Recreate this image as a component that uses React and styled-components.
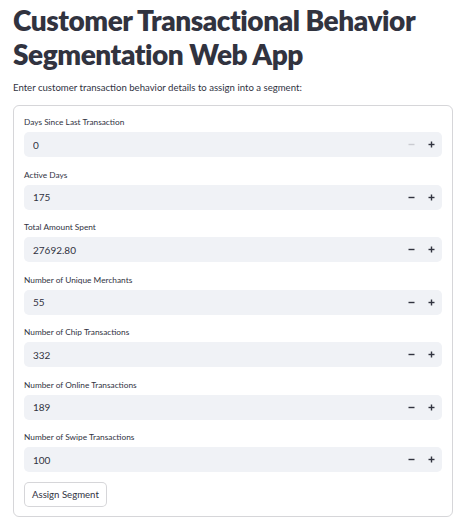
import React from 'react';
import styled, { createGlobalStyle } from 'styled-components';

const GlobalStyle = createGlobalStyle`
  body {
    margin: 0;
    background: #ffffff;
    color: #31333f;
    font-family: "Lato", "Noto Sans", sans-serif;
  }
`;

const Main = styled.main`
  padding: 4px 7px 0 13px;
`;

const Title = styled.h1`
  margin: 0;
  font-size: 28px;
  line-height: 1.2;
  font-weight: 800;
  color: #31333f;
  letter-spacing: -0.45px;
`;

const Intro = styled.p`
  margin: 9px 0 0 0;
  font-size: 9.6px;
  line-height: 16px;
`;

const FormBox = styled.form`
  margin-top: 9px;
  width: 440px;
  box-sizing: border-box;
  border: 1px solid rgba(49, 51, 63, 0.2);
  border-radius: 6px;
  padding: 9px 10px 9px 10px;
  display: flex;
  flex-direction: column;
  gap: 10.5px;
`;

const Field = styled.div`
  display: flex;
  flex-direction: column;
  gap: 3px;
`;

const Label = styled.label`
  font-size: 8.3px;
  line-height: 14px;
  color: #31333f;
`;

const InputWrap = styled.div`
  display: flex;
  align-items: center;
  height: 25px;
  background: #f0f2f6;
  border-radius: 5px;
`;

const Value = styled.input`
  flex: 1;
  min-width: 0;
  border: none;
  outline: none;
  background: transparent;
  padding: 0 0 0 9px;
  font-family: inherit;
  font-size: 10px;
  color: #31333f;
`;

const Step = styled.button`
  width: 20px;
  height: 25px;
  border: none;
  background: transparent;
  padding: 0;
  display: flex;
  align-items: center;
  justify-content: center;
  color: ${(p) => (p.disabled ? 'rgba(49, 51, 63, 0.2)' : '#31333f')};
  cursor: pointer;
`;

const Buttons = styled.div`
  display: flex;
  padding-right: 1px;
`;

const SubmitButton = styled.button`
  align-self: flex-start;
  margin-top: -0.5px;
  height: 25px;
  padding: 0 7px;
  background: #ffffff;
  border: 1px solid rgba(49, 51, 63, 0.2);
  border-radius: 5px;
  font-family: inherit;
  font-size: 9.6px;
  color: #31333f;
`;

const Minus = () => (
  <svg width="7" height="7" viewBox="0 0 7 7">
    <rect x="0.5" y="2.8" width="6" height="1.4" fill="currentColor" />
  </svg>
);

const Plus = () => (
  <svg width="7" height="7" viewBox="0 0 7 7">
    <rect x="0.5" y="2.8" width="6" height="1.4" fill="currentColor" />
    <rect x="2.8" y="0.5" width="1.4" height="6" fill="currentColor" />
  </svg>
);

const fields = [
  { label: 'Days Since Last Transaction', value: '0', min: true },
  { label: 'Active Days', value: '175' },
  { label: 'Total Amount Spent', value: '27692.80' },
  { label: 'Number of Unique Merchants', value: '55' },
  { label: 'Number of Chip Transactions', value: '332' },
  { label: 'Number of Online Transactions', value: '189' },
  { label: 'Number of Swipe Transactions', value: '100' },
];

const NumberField = ({ label, value, min }) => (
  <Field>
    <Label>{label}</Label>
    <InputWrap>
      <Value defaultValue={value} />
      <Buttons>
        <Step type="button" disabled={min}>
          <Minus />
        </Step>
        <Step type="button">
          <Plus />
        </Step>
      </Buttons>
    </InputWrap>
  </Field>
);

const App = () => (
  <>
    <GlobalStyle />
    <Main>
      <Title>Customer Transactional Behavior Segmentation Web App</Title>
      <Intro>Enter customer transaction behavior details to assign into a segment:</Intro>
      <FormBox onSubmit={(e) => e.preventDefault()}>
        {fields.map((f) => (
          <NumberField key={f.label} {...f} />
        ))}
        <SubmitButton type="submit">Assign Segment</SubmitButton>
      </FormBox>
    </Main>
  </>
);

export default App;
